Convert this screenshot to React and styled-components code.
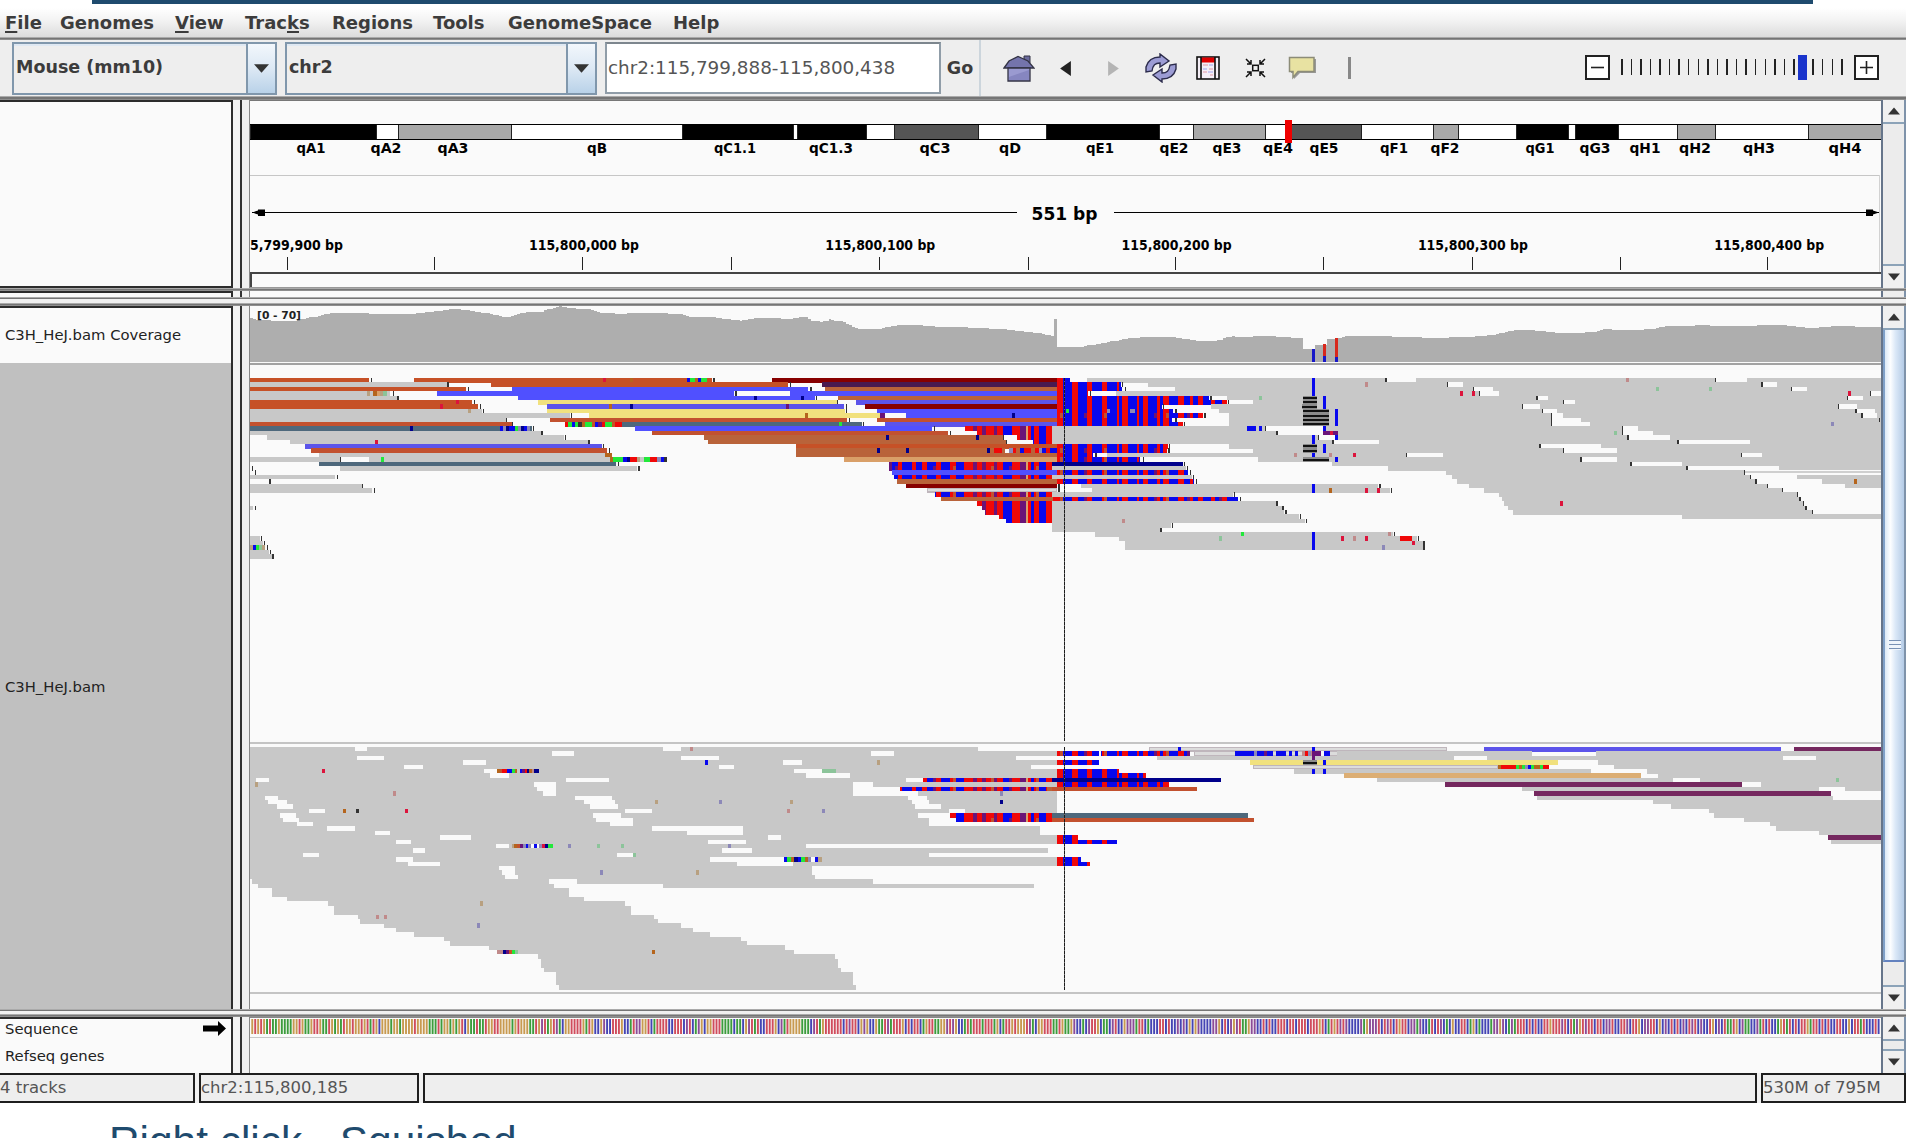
import React from "react";
import styled, { createGlobalStyle } from "styled-components";

const Global = createGlobalStyle`
  html, body { margin: 0; padding: 0; background: #fff; overflow: hidden; }
  * { box-sizing: border-box; }
`;

const UI = '"DejaVu Sans", sans-serif';

const Page = styled.div`
  width: 1906px; height: 1138px; overflow: hidden; background: #fff;
  display: flex; flex-direction: column; font-family: ${UI}; color: #3c3c3c;
`;
const SlideRule = styled.div`height: 4px; flex: none; margin: 0 93px 4px 92px; background: #1f4b6e;`;
const MenuBar = styled.nav`
  flex: none; height: 29px; display: flex; align-items: center; padding: 1px 0 0 5px;
  background: linear-gradient(#fff, #f4f4f4 40%, #dcdcdc); font-weight: bold; font-size: 18px; line-height: 24px;
  u { text-decoration-thickness: 2px; text-underline-offset: 2px; }
`;
const MenuItem = styled.span`white-space: pre; width: ${(p) => p.$w}px;`;
const Rule = styled.div`
  flex: none; height: ${(p) => p.$h}px; background: ${(p) => p.$c || "#757575"};
  border-top: 1px solid #aaa; border-bottom: ${(p) => (p.$h > 2 ? "1px solid #8e8e8e" : "0")};
`;
const Toolbar = styled.div`flex: none; height: 56px; background: #eee; display: flex; align-items: center; padding-left: 12px;`;
const Combo = styled.div`
  width: ${(p) => p.$w}px; height: 53px; margin-right: 8px; display: flex; align-items: stretch;
  border: 2px solid #8097ac; background: #eeeeee; box-shadow: inset 0 2px 0 #dfe8f2;
  font-weight: bold; font-size: 17.5px; line-height: 47px; padding-left: 2px;
`;
const ComboLabel = styled.div`flex: 1; white-space: pre;`;
const ComboArrow = styled.div`
  width: 29px; border-left: 2px solid #8097ac; display: flex; align-items: center; justify-content: center;
  background: linear-gradient(#f2f7fc, #dce8f4 50%, #b9d2e8);
`;
const Locus = styled.div`
  width: 336px; height: 52px; border: 2px solid #909da8; border-top-color: #7d868e; background: #fff;
  font-size: 18.35px; line-height: 48px; padding-left: 1px; white-space: pre; color: #555;
`;
const GoButton = styled.div`
  width: 40px; height: 56px; line-height: 57px; font-weight: bold; font-size: 17.5px; text-align: center; border-right: 2px solid #ccd5dc;
`;
const IconStrip = styled.div`display: flex; margin-left: 14px;`;
const IconButton = styled.div`width: 47.3px; height: 40px; display: flex; align-items: center; justify-content: center;`;
const ZoomGroup = styled.div`display: flex; align-items: center; margin-left: auto; padding: 0 27px 2px 0;`;
const ZoomBox = styled.div`
  width: 25px; height: 25px; border: 2px solid #222; background: #fff; display: flex; align-items: center; justify-content: center;
`;

const PanelRow = styled.section`flex: none; height: ${(p) => p.$h}px; display: flex; background: #f0f0f0;`;
const Names = styled.div`
  width: 233px; height: 100%; border: 2px solid #2c2c2c; border-left: 0; border-bottom-width: ${(p) => (p.$bottom ? 2 : 0)}px;
  background: #fafafa; display: flex; flex-direction: column; color: #222; font-size: 14.8px;
`;
const Splitter = styled.div`width: 9px; margin-right: 7px; border-right: 2px solid #333; background: #f2f2f2;`;
const Body = styled.div`width: 1632px; height: 100%; border-left: 1px solid #888; background: #fafafa; overflow: hidden; svg { display: block; }`;
const TrackName = styled.div`
  height: ${(p) => p.$h}px; flex: ${(p) => (p.$fill ? 1 : "none")}; display: flex; align-items: center; justify-content: space-between;
  padding: 0 5px ${(p) => p.$pad || 0}px 5px; background: ${(p) => p.$bg || "transparent"}; white-space: pre;
`;
const ScrollBar = styled.div`
  width: 25px; height: 100%; border-left: 2px solid #66758a; border-right: 2px solid #7f93aa; background: #eee;
  display: flex; flex-direction: column;
`;
const ScrollButton = styled.div`height: ${(p) => p.$h}px; display: flex; align-items: center; justify-content: center; background: #f0f0f0;`;
const Trough = styled.div`flex: 1; border: solid #8ca3b8; border-width: 2px 0; background: #ececec; display: flex; flex-direction: column;`;
const Thumb = styled.div`
  height: ${(p) => p.$h}px; border-bottom: 2px solid #6382bf; border-left: 2px solid #7fa0c8; display: flex; align-items: center; justify-content: center;
  background: linear-gradient(90deg, #dce9f6, #fdfeff 28%, #dbe8f7 55%, #b4cbe6);
`;
const Grip = styled.div`width: 12px; height: 10px; background: repeating-linear-gradient(#7891b5 0 1px, #eef4fb 1px 4px);`;
const StatusBar = styled.footer`
  flex: none; height: 30px; display: flex; gap: 4px; background: #f0f0f0; font-size: 16.5px; line-height: 26px; color: #555;
`;
const StatusCell = styled.div`
  flex: ${(p) => (p.$w ? "none" : 1)}; width: ${(p) => p.$w || 0}px; border: 2px solid #1e1e1e; margin-left: ${(p) => p.$ml || 0}px;
  white-space: pre; background: #eee;
`;
const Caption = styled.div`
  font-family: "Liberation Sans", Arial, sans-serif; font-size: 42.4px; line-height: 46px; color: #1f4b6e; padding: 16px 0 0 109px; white-space: pre;
`;

const Tri = ({ dir = "down", c = "#333", s = 12 }) => {
  const d = { down: "M0 0H14L7 8Z", up: "M0 8H14L7 0Z", left: "M10 0V14L0 7Z", right: "M0 0V14L10 7Z" }[dir];
  const wide = dir === "down" || dir === "up";
  return <svg width={s} height={s} viewBox={wide ? "0 -3 14 14" : "-2 0 14 14"}><path d={d} fill={c} /></svg>;
};

/* ---------- reads ---------- */
const COL = {
  g: "#c8c8c8", o: "#c65127", b: "#b9633a", c: "#c2512f", B: "#5050ff", V: "#5c54ea", y: "#f1e17e", t: "#4e687c", m: "#870000",
  d: "#4a1a50", w: "#fafafa", n: "#00008b", R: "#f00808", U: "#0808ee", P: "#6a1478", p: "#75285f", k: "#333", a: "#d99f68", A: "#dcae74",
  G: "#22e83a", e: "#b5651d", x: "#dcdcdc", r: "#dc143c", s: "#c08a8a", h: "#8cc49a", l: "#8c88b8", q: "#b8a080", f: "#bfb6bc",
};
const COLUMNS = [
  [1946, "P"], [1957, "U"], [1975, "R"], [1985, "U"], [2015, "R"], [2028, "U"], [2045, "R"], [2060, "U"], [2087, "R"], [2103, "U"],
  [2130, "R"], [2147, "U"], [2173, "R"], [2200, "P"], [2210, "R"], [2227, "P"], [2238, "R"], [2262, "P"], [2272, "R"], [2290, "U"],
  [2315, "R"], [2340, "P"], [2357, "a"], [2365, "R"], [2372, "U"], [2382, "R"], [2398, "U"], [2417, "R"], [2435, "R"], [2470, "U"],
  [2497, "R"], [2513, "U"], [2540, "R"], [2557, "U"], [2585, "R"], [2601, "U"], [2630, "R"], [2638, "U"], [2646, "R"], [2663, "U"],
  [2690, "R"], [2698, "U"], [2708, "R"], [2725, "U"], [2752, "R"], [2761, "U"], [2770, "R"], [2788, "U"], [2815, "R"], [2832, "U"],
  [2850, "R"], [2860, "U"], [2874, "R"], [2888, "U"], [2912, "R"], [2926, "U"], [2945, "R"], [2962, "U"], [3010, "U"],
];
const mismatch = (x1, x2, thin) => {
  const out = [];
  for (let i = 0; i < COLUMNS.length - 1; i++) {
    const a = Math.max(x1, COLUMNS[i][0]), b = Math.min(x2, COLUMNS[i + 1][0]);
    if (b > a) {
      out.push([a, b, COLUMNS[i][1]]);
      if (thin && b - a > 14 && i % 3 === 1) out.push([b - 9, b, COLUMNS[i][1] === "U" ? "P" : "c"]);
    }
  }
  return out;
};
const speckle = (x1, x2, seq) => {
  const w = (x2 - x1) / seq.length;
  return [...seq].map((c, i) => [x1 + i * w, x1 + (i + 1) * w, c]).filter((s) => s[2] !== ".");
};
/* A row is "colour:start-end" items; k:x is an insert marker, M a mismatch run, S:start-end-seq a coloured run. */
const parseRow = (row) =>
  row.split(" ").filter(Boolean).flatMap((item) => {
    const [c, v] = item.split(":");
    const [a, b, seq] = v.split("-");
    if (c === "k") return [[+a - 2, +a + 2.2, "k"]];
    if (c === "M") return mismatch(+a, +b, false);
    if (c === "N") return mismatch(+a, +b, true);
    if (c === "S") return speckle(+a, +b, seq);
    if (c === "X") return [[+a, +b, "f"], [+a + 3, +b - 3, "x", 1]];
    if (c === "K") return [[+a, +b, "D"]];
    if (b === undefined) return [[+a - 4, +a + 5, c]];
    return [[+a, +b, c]];
  });
const Rows = ({ rows, y0, pitch }) =>
  rows.map((row, i) => {
    const y = y0 + pitch * i;
    return (
      <g key={i}>
        {parseRow(row).map(([a, b, c, inset], j) =>
          c === "D" ? (
            <g key={j}>
              <rect x={a} y={y} width={b - a} height={pitch} fill="#8c8c8c" />
              <rect x={a} y={y + 4} width={b - a} height="6" fill="#111" />
            </g>
          ) : (
            <rect key={j} x={a} y={inset ? y + 3 : y} width={b - a} height={inset ? pitch - 6 : pitch + 0.3} fill={COL[c]} />
          )
        )}
      </g>
    );
  });

const FORWARD = [
  "o:30-387 k:395 o:522-1415 S:1340-1400-UGGeUGG r:1094 e:1173 k:1422 m:1597-2452 R:2452-2470 U:2470-2490 g:2540-4922 k:3438 w:3441-3528 s:4162 w:4426-4521 k:4426 U:3219",
  "g:30-620 k:624 o:753-1645 k:1651 d:1746-2452 M:2452-2642 k:2648 g:2725-4922 s:3378 w:3622-3670 k:3622 w:4566-4610 k:4566 U:3219",
  "o:30-678 k:685 B:816-1705 k:1713 b:1755-2452 M:2452-2645 k:2657 g:2805-4922 w:3701-3758 k:3701 h:4251 h:4410 w:4654-4701 k:4654 U:3219",
  "g:30-450 S:380-450-q.eaqh. k:461 B:592-1482 k:1488 w:1491-1650 B:1650-2452 M:2452-2545 k:2552 g:2628-4922 r:3664 r:3699 w:3719-3776 k:3719 r:4829 w:4892-4922 k:4892 U:3219",
  "g:30-470 k:474 B:833-1725 n:1547 n:1688 k:1730 b:1795-2452 M:2452-2908 k:2913 g:2960-4922 h:3060 w:3891-3925 k:3891 w:4822-4868 k:4822 K:3190-3230 U:3254",
  "o:30-697 r:652 k:703 y:895-1790 k:1793 V:1848-2452 M:2452-2960 k:2966 g:3038-4922 w:3970-4005 k:3970 K:3190-3230 U:3254",
  "o:30-715 r:603 k:721 V:921-1812 P:1643 e:1110 n:1173 k:1819 m:1875-2452 M:2452-2765 k:2770 g:2912-4922 w:3847-3899 k:3847 w:4795-4852 k:4795 K:3186-3230 U:3254",
  "g:30-725 q:688 k:730 y:921-1815 k:1819 B:1910-2452 M:2452-2800 l:2600-2610 l:2670-2685 G:2483 k:2808 g:2937-4922 w:3908-3951 k:3908 w:4848-4905 k:4848 K:3190-3266 U:3290",
  "g:30-990 k:995 y:1046-1935 e:1698 P:1920-1935 w:1938-1998 B:1998-2452 n:2319 N:2452-2890 k:2895 g:2968-4922 w:3935-3969 k:3935 w:4866-4912 k:4866 K:3190-3266 U:3290",
  "g:30-798 k:800 c:931-1822 k:1828 c:1910-2452 M:2452-2795 k:2808 g:2968-4922 w:3935-4022 k:3935 k:4919 K:3190-3266 U:3290",
  "c:30-815 k:818 S:975-1145-RGUGkeGGoUPRGGoRR t:1145-1865 G:1800 k:1871 V:1935-2452 M:2452-2828 k:2833 g:2968-4922 w:3935-4049 k:3935 l:4776 K:3190-3266 U:3290",
  "t:30-875 n:515 S:780-870-UlnUUGlnUl k:880 B:1186-2075 k:2083 M:2174-2435 g:2435-4922 w:3078-3250 U:3020-3048 U:3056-3065 k:3076 U:3250-3259 w:4147-4194 k:4147",
  "g:30-903 k:906 c:1236-2125 k:2131 M:2210-2435 g:2435-4922 w:3111-3250 k:3111 P:3250-3295 r:3275 w:4147-4238 k:4147 h:4127",
  "g:80-972 k:977 b:1393-2288 n:1941 n:2213 k:2291 M:2332-2435 g:2435-4922 w:3235-3285 k:3235 w:4164-4291 k:4164 U:3219 U:3290",
  "g:150-1043 r:410 k:1047 b:1405-2298 k:2300 M:2380-2435 g:2435-4922 w:3279-3418 k:3279 w:4314-4530 k:4314 U:3219",
  "V:195-1085 k:1091 o:1668-2452 M:2452-2785 k:2789 g:2968-4922 w:3900-4084 k:3900 K:3190-3230 U:3254",
  "c:212-1100 k:1108 b:1668-2240 n:1914 n:2002 S:2240-2452-nbRRb.lRbURRbRlURUU N:2452-2780 k:2787 g:3038-4922 w:3970-4132 k:3970 K:3190-3230 U:3254",
  "g:238-1110 e:1095-1115 b:1668-2452 M:2452-2560 k:2568 g:2600-4922 s:3167 s:3272 r:3342 w:3500-3608 k:3500 w:4504-4565 k:4504 U:3219",
  "g:30-300 k:302 g:387-1110 G:427 S:1110-1282-eGGGUnRRqgGGRRlUk a:1812-2452 N:2452-2700 k:2710 g:3055-4922 w:4023-4132 k:4023 K:3190-3266 U:3290",
  "t:238-1128 k:1135 M:1936-2435 n:2435-2828 k:2833 g:3275-4922 w:4173-4327 k:4173",
  "k:38 g:300-1190 k:1197 N:1946-2435 g:2435-2838 k:2843 g:3445-4922 w:4341-4618 k:4341",
  "k:46 B:1955-2450 N:2452-2845 k:2851 g:3617-4922 w:4514-4922 k:4514",
  "g:30-285 k:293 M:1963-2435 g:2435-2855 k:2860 g:3635-4922 w:4531-4672 k:4531",
  "k:90 b:1972-2452 M:2452-2862 k:2869 g:3652-4922 w:4548-4746 k:4548 e:4847",
  "g:30-365 k:368 m:1998-2452 k:2457 g:2523-3415 k:3420 g:3688-4922 w:4583-4816 k:4583 U:3219",
  "g:30-397 k:404 X:2062-2452 k:2457 g:2557-3450 e:3272 r:3378 r:3414 k:3455 g:3732-4628 k:4628 U:3219",
  "N:2086-2435 g:2435-2978 k:2983 g:3776-4672 k:4672",
  "b:2104-2440 N:2440-2995 k:3001 g:3785-4680 k:4680",
  "M:2210-2435 g:2435-3108 k:3111 g:3793-4690 r:3965 k:4690",
  "g:30-40 k:46 M:2226-2435 g:2435-3125 k:3129 g:3803-4698 k:4698",
  "M:2235-2435 g:2435-3133 k:3138 g:3820-4717 k:4717",
  "M:2278-2435 g:2435-3178 k:3182 g:4327-4922",
  "M:2298-2435 g:2435-3195 s:2650 k:3199",
  "g:2435-2793 k:2798",
  "g:2435-2760 k:2763",
  "g:2565-3458 G:3007 s:3449 k:3464 U:3219",
  "g:30-60 k:64 g:2638-3530 h:2941 r:3307 s:3342 r:3378 R:3480-3515 k:3535 U:3219",
  "g:30-70 k:73 g:2655-3550 r:3519 k:3552 U:3219",
  "S:30-75-qUGhq k:82 g:2655-3550 l:3431 k:3552 U:3219",
  "g:30-88 k:91",
  "g:30-95 k:99",
];

const REVERSE = [
  "g:30-2214 w:345-380 w:1270-1322 s:1353 X:2727-3620 U:2818 U:3219 V:3731-4622 p:4661-4922",
  "g:30-2452 w:935-1002 w:1892-1963 N:2452-2850 w:2576-2584 X:2862-3600 g:3290-3877 S:2985-3270-UUUUUUlUUPUU.UUU.U.U.sRlsPPwUU P:3219 g:4067-4922",
  "g:30-2328 w:352-432 w:1323-1438 g:2752-3642 g:3740-4922 P:3219 w:4630-4728",
  "g:30-2452 w:670-737 U:1398 w:1628-1685 q:1914 M:2452-2576 y:3030-3955 K:3190-3230 U:3254 g:4075-4922",
  "g:30-2373 w:493-548 w:1438-1481 X:3040-3775 S:3775-3927-eRRRRRGeGlUGeeGRR g:4123-4922",
  "g:30-2452 r:251 w:732-775 S:772-898-ecRRUUGe.UPRnesnn w:1663-1747 h:1747-1788 M:2452-2637 g:3163-4053 U:3219 U:3254 g:4220-4922",
  "g:30-2452 w:750-808 w:1698-1830 M:2452-2718 A:3312-4203 g:4255-4922",
  "g:30-1998 w:48-88 w:979-1107 N:2050-2435 n:2435-2942 g:3410-4922 w:4300-4380 h:4793",
  "g:30-2452 q:48 w:882-948 w:1840-1900 M:2452-2788 p:3616-4507 g:4564-4922",
  "g:30-1980 w:891-948 w:1840-1980 N:1980-2435 b:2420-2452 c:2435-2870 g:3847-4922 w:4737-4815",
  "g:30-2452 s:462 w:908-948 w:1840-2033 l:2284 p:3882-4772",
  "g:30-2452 w:75-114 w:1005-1115 w:2005-2060 g:3890-4780",
  "g:30-2452 w:84-141 w:1032-1124 q:1248 l:1441 q:1653 w:2017-2067 n:2284 g:4238-4922",
  "g:30-2452 w:110-159 w:1050-1133 w:2024-2103 g:4292-4922",
  "g:30-2452 w:207-256 e:312 k:349 k:354 r:498 w:1155-1235 s:1646 l:1751 w:2126-2175 g:4406-4922",
  "g:30-2033 w:120-167 w:1058-1142 M:2131-2435 t:2435-3025 g:4423-4922",
  "g:30-2068 w:128-176 w:1067-1178 N:2148-2435 c:2435-3042 g:4511-4922",
  "g:30-2068 w:172-220 w:1111-1178 g:4591-4922",
  "g:30-2400 w:260-344 w:1235-1508 g:4609-4922",
  "g:30-2400 w:405-450 w:1341-1508 g:4737-4922",
  "g:30-2452 w:600-693 w:1583-1623 M:2452-2514 p:4763-4922",
  "g:30-2452 w:468-512 w:1403-1517 M:2452-2630 g:4772-4922",
  "g:30-1698 w:767-807 S:815-940-qecPlUlwUwlrnGG l:988 h:1076 h:1146 l:1468",
  "g:30-2425 w:520-556 w:1446-1535",
  "g:30-2068 w:190-238 w:1130-1178 h:1183",
  "g:30-2452 w:468-520 w:1411-1640 S:1632-1745-UGenUGelwUq M:2452-2523",
  "g:30-2452 w:503-600 w:1490-1659 M:2452-2549",
  "g:30-1716 w:777-824", "g:30-1716 w:785-824 l:1085 q:1371", "g:30-1724 w:794-833",
  "g:36-1900 w:927-1010", "g:53-943 g:1270-2381", "g:97-988", "g:97-988", "g:141-1032", "g:265-1155 q:724", "g:282-1173", "g:282-1173",
  "g:353-1243 s:411 s:436", "g:361-1253", "g:432-1322 l:714", "g:468-1358", "g:521-1411", "g:613-1503", "g:631-1521", "g:746-1636",
  "S:772-835-ssnPoGh g:835-1663 e:1239", "g:895-1785", "g:904-1795", "g:904-1795", "g:913-1804", "g:948-1839", "g:948-1839", "g:948-1839", "g:957-1848",
];

const PROFILE = [
  30, 70, 50, 74, 150, 78, 185, 72, 238, 62, 265, 56, 340, 55, 420, 58, 520, 58, 550, 52, 600, 47, 640, 42, 690, 48, 725, 52, 765, 60, 790, 67, 825, 60,
  845, 52, 900, 50, 950, 34, 990, 38, 1050, 44, 1080, 52, 1130, 58, 1180, 55, 1320, 57, 1350, 66, 1400, 65, 1450, 72, 1500, 76, 1540, 70, 1600, 70,
  1650, 72, 1690, 66, 1710, 76, 1740, 81, 1765, 73, 1800, 78, 1820, 86, 1840, 98, 1870, 103, 1910, 102, 1940, 96, 1970, 91, 2000, 89, 2080, 95, 2220, 98,
  2280, 103, 2330, 108, 2380, 112, 2410, 118, 2433, 122, 2434, 73, 2443, 73, 2444, 156, 2525, 155, 2550, 150, 2600, 142, 2655, 131, 2720, 127, 2750, 125,
  2800, 128, 2850, 134, 2890, 139, 2940, 134, 2970, 123, 3020, 127, 3040, 122, 3100, 123, 3140, 128, 3187, 130, 3188, 160, 3223, 160, 3224, 148,
  3259, 148, 3260, 132, 3294, 130, 3315, 122, 3450, 123, 3490, 127, 3600, 130, 3680, 125, 3760, 120, 3800, 108, 3850, 105, 3930, 110, 3970, 115,
  4060, 110, 4090, 104, 4200, 106, 4250, 98, 4280, 94, 4380, 92, 4500, 94, 4610, 90, 4650, 94, 4710, 99, 4780, 94, 4922, 96,
];
const coverage = () => {
  let d = "M30 200", k = 0;
  for (let x = 30; x < 4922; x += 8.9) {
    while (k < PROFILE.length - 4 && PROFILE[k + 2] <= x) k += 2;
    const f = (x - PROFILE[k]) / (PROFILE[k + 2] - PROFILE[k]);
    const y = Math.round((PROFILE[k + 1] + f * (PROFILE[k + 3] - PROFILE[k + 1])) / 2.4) * 2.4;
    d += `L${x.toFixed(1)} ${y.toFixed(1)}L${(x + 8.9).toFixed(1)} ${y.toFixed(1)}`;
  }
  return d + "L4922 200Z";
};

/* Units are thirds of a pixel: x from 30 (left edge), y offset per group. */
const Alignments = () => (
  <svg width="1631" height="704" viewBox="30 33 4893 2112" shapeRendering="crispEdges">
    <path d={coverage()} fill="#aeaeae" />
    <rect x="3215" y="161" width="9" height="39" fill="#1818c8" />
    <rect x="3250" y="147" width="9" height="36" fill="#d8281c" /><rect x="3250" y="183" width="9" height="17" fill="#1818c8" />
    <rect x="3286" y="129" width="9" height="58" fill="#d8281c" /><rect x="3286" y="187" width="9" height="13" fill="#1818c8" />
    <rect x="30" y="204" width="4893" height="6" fill="#a2a2a2" />
    <Rows rows={FORWARD} y0={249} pitch={13.2} />
    <rect x="4514" y="529" width="408" height="6" fill="#cfcfcf" />
    <rect x="30" y="1341" width="4893" height="5" fill="#c4c4c4" />
    <Rows rows={REVERSE} y0={1356} pitch={13.23} />
    <rect x="30" y="2091" width="4893" height="5" fill="#c4c4c4" />
    <path d="M2472 249V1337M2472 1356V2086" stroke="#6a6a6a" strokeWidth="3" />
    <path d="M2472 249V1337M2472 1356V2086" stroke="#1c1c1c" strokeWidth="3" strokeDasharray="9 3" />
    <text x="51" y="72" fontFamily="DejaVu Sans" fontWeight="bold" fontSize="33" fill="#222" textLength="132" lengthAdjust="spacingAndGlyphs">[0 - 70]</text>
  </svg>
);

/* ---------- ideogram and ruler ---------- */
const BANDS = [
  [250, 376, "#000"], [376, 398, "#fff"], [398, 511, "#a8a8a8"], [511, 682, "#fff"], [682, 793, "#000"], [793, 797, "#fff"], [797, 866, "#000"],
  [866, 894, "#fff"], [894, 978, "#555"], [978, 1046, "#fff"], [1046, 1159, "#000"], [1159, 1193, "#fff"], [1193, 1265, "#a8a8a8"],
  [1265, 1288, "#fff"], [1288, 1361, "#555"], [1361, 1433, "#fff"], [1433, 1458, "#a8a8a8"], [1458, 1516, "#fff"], [1516, 1568, "#000"],
  [1568, 1575, "#fff"], [1575, 1618, "#000"], [1618, 1677, "#fff"], [1677, 1715, "#a8a8a8"], [1715, 1808, "#fff"], [1808, 1882, "#a8a8a8"],
];
const BAND_NAMES = [
  ["qA1", 311, 29], ["qA2", 386, 31], ["qA3", 453, 31], ["qB", 597, 20], ["qC1.1", 735, 42], ["qC1.3", 831, 44], ["qC3", 935, 31], ["qD", 1010, 22],
  ["qE1", 1100, 28], ["qE2", 1174, 29], ["qE3", 1227, 29], ["qE4", 1278, 30], ["qE5", 1324, 29], ["qF1", 1394, 28], ["qF2", 1445, 29], ["qG1", 1540, 29],
  ["qG3", 1595, 31], ["qH1", 1645, 31], ["qH2", 1695, 32], ["qH3", 1759, 32], ["qH4", 1845, 33],
];
const TICKS = [288, 435, 583, 732, 880, 1029, 1176, 1324, 1472.5, 1621, 1768];
const Ruler = () => (
  <svg width="1631" height="188" viewBox="250 100 1631 188" fontFamily="DejaVu Sans" fontWeight="bold" fill="#000" textAnchor="middle">
    <g shapeRendering="crispEdges">
      <rect x="250" y="100" width="1632" height="1" fill="#777" />
      {BANDS.map(([a, b, c], i) => <rect key={i} x={a} y="124" width={b - a} height="15" fill={c} stroke="#222" strokeWidth="1" />)}
      <rect x="250" y="124" width="1632" height="1" /><rect x="250" y="139" width="1632" height="1" />
      <rect x="250" y="175" width="1630" height="1" fill="#c6c6c6" />
      <rect x="1879" y="175" width="1" height="97" fill="#d2d2d2" />
      <path d="M252 212.5H1017M1114 212.5H1879" stroke="#000" strokeWidth="1.3" />
      {TICKS.map((x) => <rect key={x} x={x - 1} y="257" width="1.2" height="13" fill="#222" />)}
      <rect x="250" y="272" width="1632" height="1.5" fill="#444" /><rect x="250" y="272" width="1.5" height="15" fill="#444" />
      <rect x="250" y="286.5" width="1632" height="1.5" fill="#999" />
    </g>
    <path d="M252 212.5L258 210.5V209.5H265V216H258V214.5ZM1879 212.5L1873 210.5V209.5H1866V216H1873V214.5Z" />
    {BAND_NAMES.map(([t, x, w]) => <text key={t} x={x} y="152.5" fontSize="14.5" textLength={w} lengthAdjust="spacingAndGlyphs">{t}</text>)}
    <rect x="1285" y="120" width="7" height="23" fill="#f00000" />
    <text x="1064.5" y="220" fontSize="18" textLength="66" lengthAdjust="spacingAndGlyphs">551 bp</text>
    <text x="250" y="250" fontSize="13.8" textAnchor="start" textLength="93" lengthAdjust="spacingAndGlyphs">5,799,900 bp</text>
    {["000", "100", "200", "300", "400"].map((n, i) => (
      <text key={n} x={584 + i * 296.3} y="250" fontSize="13.8" textLength="110" lengthAdjust="spacingAndGlyphs">{`115,800,${n} bp`}</text>
    ))}
  </svg>
);

const BASES = ["#c89a50", "#d04c5c", "#3c9c3c", "#4444b4", "#8c4c98"];
const Sequence = () => {
  let seed = 41;
  const bars = [];
  for (let i = 0; i < 551; i++) {
    seed = (seed * 1103515245 + 12345) % 2147483648;
    const v = (seed >> 12) % 10;
    const pick = i < 95 ? [0, 0, 0, 0, 1, 1, 2, 2, 2, 3] : i < 270 ? [0, 0, 1, 1, 1, 2, 2, 3, 3, 4] : [0, 1, 1, 1, 2, 3, 3, 3, 4, 4];
    bars.push(<rect key={i} x={251.3 + i * 2.957} y="1019" width="1.9" height="15" fill={BASES[pick[v]]} />);
  }
  return (
    <svg width="1631" height="56" viewBox="250 1017 1631 56">
      <rect x="250" y="1017" width="1631" height="1" fill="#888" />
      {bars}
      <rect x="250" y="1037" width="1631" height="1" fill="#c8c8c8" />
    </svg>
  );
};

/* ---------- toolbar icons ---------- */
const Home = () => (
  <svg width="32" height="27" viewBox="0 0 32 27">
    <path d="M21 1h6v7h-6z" fill="#6a6a9c" stroke="#334" />
    <path d="M1 13L6 6 15 1.5 25 6 31 13Z" fill="#7474ac" stroke="#334" strokeWidth="1.3" />
    <path d="M5 13H27V26H5Z" fill="#9a9ad0" stroke="#334" strokeWidth="1.3" />
    <path d="M6 22L26 15V25H6Z" fill="#8686c0" />
  </svg>
);
const Refresh = () => (
  <svg width="34" height="30" viewBox="0 0 34 30" fill="#9c9cd4" stroke="#2c2c4c" strokeWidth="1.4">
    <path d="M2 19V14C4 7 9 4 16 4V1L25 8 16 14V10C11 10 9 12 8 18Z" />
    <path d="M32 11V16C30 23 25 26 18 26V29L9 22 18 16V20C23 20 25 18 26 12Z" />
  </svg>
);
const Region = () => (
  <svg width="24" height="24" viewBox="0 0 24 24">
    <rect x="1" y="1" width="22" height="22" fill="#f4eef6" stroke="#111" strokeWidth="1.6" />
    <rect x="5" y="1.5" width="14" height="5" fill="#e00000" />
    <path d="M5 1V23M19 1V23" stroke="#111" strokeWidth="1.6" />
    <path d="M7 9H12M13 13H17M7 16H11M14 19H17" stroke="#e8b4c0" strokeWidth="1.5" /><path d="M13 9H17M7 13H11M12 16H17" stroke="#bcbcf0" strokeWidth="1.5" />
  </svg>
);
const Fit = () => (
  <svg width="21" height="20" viewBox="0 0 21 20" fill="none" stroke="#111" strokeWidth="1.5">
    <rect x="7.7" y="7.3" width="5.6" height="5.4" />
    <path d="M1 1L6 6M6 2V6H2M20 1L15 6M15 2V6H19M1 19L6 14M2 14H6V18M20 19L15 14M19 14H15V18" />
  </svg>
);
const Note = () => (
  <svg width="29" height="24" viewBox="0 0 29 24">
    <path d="M3 3H28V17H12L6 23V17H3Z" fill="#999" />
    <path d="M1.5 1.5H26V15.5H10L5 21.5V15.5H1.5Z" fill="#e8e2a2" stroke="#8c8c78" strokeWidth="1.5" />
  </svg>
);
const ZoomTicks = () => (
  <svg width="244" height="27" viewBox="1610 54 244 27" shapeRendering="crispEdges">
    {Array.from({ length: 24 }, (_, i) => <rect key={i} x={1621 + i * 9.57} y="59" width="1.5" height="16" fill="#222" />)}
    <rect x="1798" y="54.5" width="9" height="25" fill="#1a34cc" />
  </svg>
);

const Scroll = ({ thumb, button = 20 }) => (
  <ScrollBar>
    <ScrollButton $h={button}><Tri dir="up" /></ScrollButton>
    <Trough>{thumb ? <Thumb $h={thumb}><Grip /></Thumb> : null}</Trough>
    <ScrollButton $h={button}><Tri /></ScrollButton>
  </ScrollBar>
);

export default function App() {
  return (
    <Page>
      <Global />
      <SlideRule />
      <MenuBar>
        <MenuItem $w={55}><u>F</u>ile</MenuItem>
        <MenuItem $w={115}>Genomes</MenuItem>
        <MenuItem $w={70}><u>V</u>iew</MenuItem>
        <MenuItem $w={87}>Trac<u>k</u>s</MenuItem>
        <MenuItem $w={101}>Regions</MenuItem>
        <MenuItem $w={75}>Tools</MenuItem>
        <MenuItem $w={165}>GenomeSpace</MenuItem>
        <MenuItem $w={60}>Help</MenuItem>
      </MenuBar>
      <Rule $h={3} />
      <Toolbar>
        <Combo $w={265}><ComboLabel>Mouse (mm10)</ComboLabel><ComboArrow><Tri s={15} /></ComboArrow></Combo>
        <Combo $w={312}><ComboLabel>chr2</ComboLabel><ComboArrow><Tri s={15} /></ComboArrow></Combo>
        <Locus>chr2:115,799,888-115,800,438</Locus>
        <GoButton>Go</GoButton>
        <IconStrip>
          <IconButton><Home /></IconButton>
          <IconButton><Tri dir="left" s={15} c="#222" /></IconButton>
          <IconButton><Tri dir="right" s={15} c="#b4b4b4" /></IconButton>
          <IconButton><Refresh /></IconButton>
          <IconButton><Region /></IconButton>
          <IconButton><Fit /></IconButton>
          <IconButton><Note /></IconButton>
          <IconButton><svg width="3" height="22"><rect width="3" height="22" fill="#888" /></svg></IconButton>
        </IconStrip>
        <ZoomGroup>
          <ZoomBox><svg width="13" height="13"><path d="M0 6.5H13" stroke="#222" strokeWidth="1.6" /></svg></ZoomBox>
          <ZoomTicks />
          <ZoomBox><svg width="13" height="13"><path d="M0 6.5H13M6.5 0V13" stroke="#222" strokeWidth="1.6" /></svg></ZoomBox>
        </ZoomGroup>
      </Toolbar>
      <Rule $h={4} />
      <PanelRow $h={188}>
        <Names $bottom /><Splitter /><Body><Ruler /></Body><Scroll button={22} />
      </PanelRow>
      <Rule $h={3} />
      <PanelRow $h={6}><Names /><Splitter /><Body /><ScrollBar /></PanelRow>
      <Rule $h={2} />
      <PanelRow $h={4} />
      <Rule $h={3} />
      <PanelRow $h={703}>
        <Names>
          <TrackName $h={55} $pad={3}>C3H_HeJ.bam Coverage</TrackName>
          <TrackName $fill $bg="#c0c0c0">C3H_HeJ.bam</TrackName>
        </Names>
        <Splitter /><Body><Alignments /></Body><Scroll thumb={632} button={22} />
      </PanelRow>
      <Rule $h={2} />
      <PanelRow $h={3} />
      <Rule $h={3} />
      <PanelRow $h={56}>
        <Names>
          <TrackName $h={23} $pad={4}>Sequence
            <svg width="23" height="15" viewBox="0 0 23 15"><path d="M0 4.5H15V0L23 7.5 15 15V10.5H0Z" fill="#000" /></svg>
          </TrackName>
          <TrackName $h={28} $pad={2}>Refseq genes</TrackName>
        </Names>
        <Splitter /><Body><Sequence /></Body><Scroll button={22} />
      </PanelRow>
      <StatusBar>
        <StatusCell $w={197} $ml={-2}>4 tracks</StatusCell>
        <StatusCell $w={220}>chr2:115,800,185</StatusCell>
        <StatusCell />
        <StatusCell $w={145}>530M of 795M</StatusCell>
      </StatusBar>
      <Caption>Right click - Squished</Caption>
    </Page>
  );
}
